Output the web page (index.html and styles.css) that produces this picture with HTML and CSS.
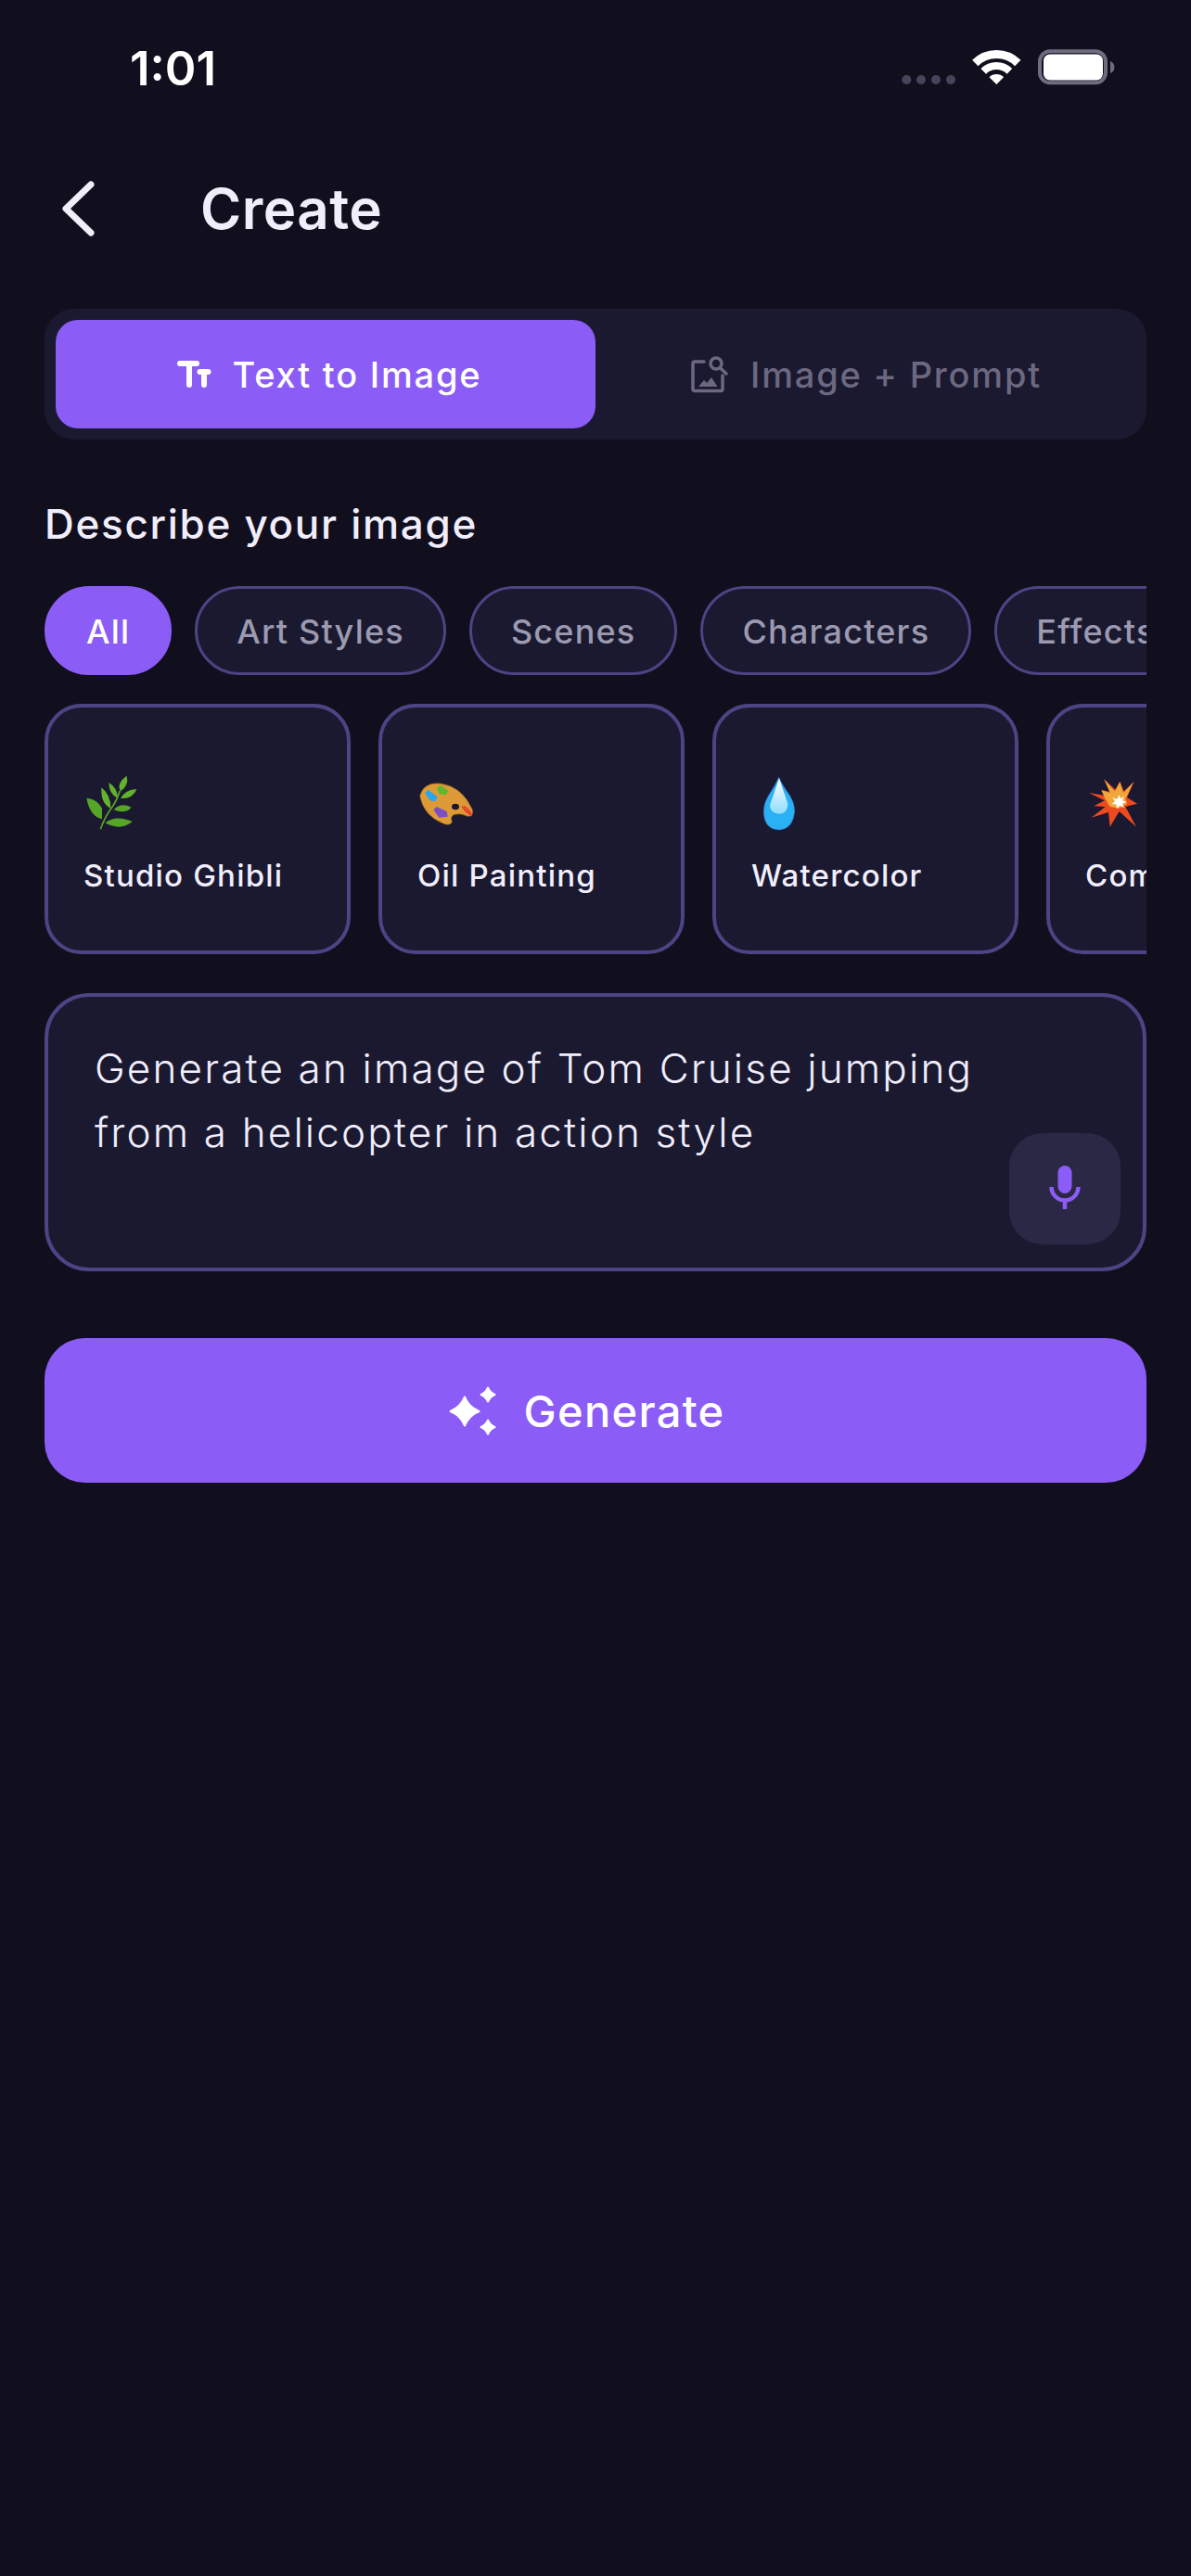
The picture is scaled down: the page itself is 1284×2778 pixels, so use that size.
FILE: index.html
```html
<!DOCTYPE html>
<html lang="en">
<head>
    <meta charset="UTF-8">
    <meta name="viewport" content="width=device-width, initial-scale=1.0">
    <title>Create</title>
    <link rel="stylesheet" href="styles.css">
</head>
<body>

    <div class="status-bar">
        <span class="time">1:01</span>
        <svg class="status-icons" width="230" height="40" viewBox="0 0 230 40">
            <g fill="#45445a">
                <circle cx="5.3" cy="33" r="5"/>
                <circle cx="21" cy="33" r="5"/>
                <circle cx="37" cy="33" r="5"/>
                <circle cx="53" cy="33" r="5"/>
            </g>
            <g fill="none" stroke="#fff">
                <path d="M79.3 15A32.5 32.5 0 0 1 125.3 15" stroke-width="9"/>
                <path d="M88.2 23.9A20 20 0 0 1 116.4 23.9" stroke-width="8"/>
            </g>
            <path d="M102.3 38L94.5 30.2A11 11 0 0 1 110.1 30.2Z" fill="#fff"/>
            <rect x="149" y="2.3" width="71" height="34" rx="11" fill="none" stroke="#6f6c80" stroke-width="4"/>
            <rect x="153" y="5.5" width="64" height="28" rx="7" fill="#fff"/>
            <path d="M225 13a7 7 0 0 1 0 13Z" fill="#6f6c80"/>
        </svg>
    </div>

    <div class="page">
        <div class="header">
            <svg class="back" width="36" height="60" viewBox="0 0 36 60">
                <path d="M32 4L5 30L32 56" fill="none" stroke="#f1eefc" stroke-width="7" stroke-linecap="round" stroke-linejoin="round"/>
            </svg>
            <h1>Create</h1>
        </div>

        <div class="tabs">
            <div class="tab active">
                <svg width="40" height="32" viewBox="0 0 40 32">
                    <path d="M5 4H23M15 4V27M26.5 13H35.5M31 13V27" fill="none" stroke="#fff" stroke-width="6" stroke-linecap="round"/>
                </svg>
                <span>Text to Image</span>
            </div>
            <div class="tab">
                <svg width="44" height="44" viewBox="0 0 44 44">
                    <g fill="none" stroke="#6b6880" stroke-width="3.5" stroke-linecap="round">
                        <path d="M16 8H6a2 2 0 0 0-2 2v27.5a2 2 0 0 0 2 2h28a2 2 0 0 0 2-2V23"/>
                        <circle cx="29" cy="10" r="6"/>
                        <path d="M33.5 15L40 21"/>
                    </g>
                    <path d="M10 35L16 28L19 31L24 25L30.5 35Z" fill="#6b6880"/>
                </svg>
                <span>Image + Prompt</span>
            </div>
        </div>

        <h2 class="section-title">Describe your image</h2>

        <div class="pills">
            <div class="pill active">All</div>
            <div class="pill">Art Styles</div>
            <div class="pill">Scenes</div>
            <div class="pill">Characters</div>
            <div class="pill">Effects</div>
        </div>

        <div class="cards">
            <div class="card">
                <svg width="60" height="60" viewBox="30 18 180 180">
                    <path d="M85 193Q100 150 125 118Q140 95 148 68" fill="none" stroke="#5fa62a" stroke-width="5"/>
                    <g fill="#62b22d">
                        <path d="M112 42Q142 60 140 92Q112 78 112 42Z"/>
                        <path d="M170 20Q178 50 150 70Q135 45 170 20Z"/>
                        <path d="M202 63Q190 95 150 93Q165 65 202 63Z"/>
                        <path d="M88 58Q118 80 118 125Q85 110 88 58Z"/>
                    </g>
                    <g fill="#56a528">
                        <path d="M40 92Q75 95 90 125L90 160Q50 150 40 92Z"/>
                        <path d="M128 130Q150 105 185 122Q165 145 128 130Z"/>
                        <path d="M100 172Q135 145 188 168Q150 200 100 172Z"/>
                    </g>
                </svg>
                <span>Studio Ghibli</span>
            </div>
            <div class="card">
                <svg width="60" height="60" viewBox="30 18 180 180">
                    <path d="M38 85Q50 40 105 45Q175 55 208 130Q212 155 190 150Q170 140 150 145Q135 150 142 170Q135 182 115 175Q50 150 38 85Z" fill="#dd9a37" stroke="#9a6426" stroke-width="2"/>
                    <ellipse cx="153" cy="120" rx="12" ry="10" fill="#1a1930"/>
                    <path d="M55 75L65 65L95 88L88 103L70 100Z" fill="#2aa6ea"/>
                    <path d="M93 60L105 50L130 68L122 82L100 78Z" fill="#5cb82e"/>
                    <path d="M82 130L92 120L125 135L128 152L100 155Z" fill="#7a4fc4"/>
                    <path d="M175 120L205 145M180 118Q200 128 205 148Q185 140 175 118" fill="none" stroke="#e8372a" stroke-width="4"/>
                </svg>
                <span>Oil Painting</span>
            </div>
            <div class="card">
                <svg width="60" height="60" viewBox="60 48 180 180">
                    <defs>
                        <linearGradient id="dropShine" x1="0" y1="0" x2="0" y2="1">
                            <stop offset="0" stop-color="#fff"/>
                            <stop offset="1" stop-color="#8fdcff"/>
                        </linearGradient>
                    </defs>
                    <path d="M149 55Q160 80 185 115Q200 140 200 165Q195 222 149 225Q100 222 100 165Q100 140 115 115Q138 80 149 55Z" fill="#29b0f5" stroke="#3b6fc9" stroke-width="2"/>
                    <path d="M150 58L178 140Q178 172 150 173Q120 172 120 145Z" fill="url(#dropShine)"/>
                </svg>
                <span>Watercolor</span>
            </div>
            <div class="card">
                <svg width="60" height="60" viewBox="60 48 180 180">
                    <path d="M120 60L158 95L172 68L185 100L218 68L195 120L228 140L190 150L225 215L170 165L140 215L135 168L80 185L125 150L88 148L122 130L72 105L130 115L112 95L140 102Z" fill="#ee4a1f"/>
                    <path d="M122 62L155 100L172 70L183 105L215 72L190 125L195 140L170 155L140 150L125 125L112 97L140 105Z" fill="#f0a63a"/>
                    <path d="M170 112L174 124L186 116L180 130L194 134L180 140L186 154L172 146L162 156L160 142L146 142L156 132L148 120L162 126Z" fill="#fff"/>
                </svg>
                <span>Comic Book</span>
            </div>
        </div>

        <div class="prompt">
            <p>Generate an image of Tom Cruise jumping<br>from a helicopter in action style</p>
            <div class="mic">
                <svg width="44" height="56" viewBox="0 0 44 56">
                    <rect x="14.5" y="3" width="15" height="30" rx="7.5" fill="#8b5cf6"/>
                    <path d="M7.5 26a14.5 14.5 0 0 0 29 0M22 41V50" fill="none" stroke="#8b5cf6" stroke-width="4.5"/>
                </svg>
            </div>
        </div>

        <div class="generate">
            <svg width="52" height="56" viewBox="0 0 52 56">
                <g fill="#fff" stroke="#fff" stroke-width="2" stroke-linejoin="round">
                    <path d="M18 13.5Q22.5 24.5 33.5 29Q22.5 33.5 18 44.5Q13.5 33.5 2.5 29Q13.5 24.5 18 13.5Z"/>
                    <path d="M43 3.5Q45.2 8.8 50.5 11Q45.2 13.2 43 18.5Q40.8 13.2 35.5 11Q40.8 8.8 43 3.5Z"/>
                    <path d="M43 38.5Q45.2 43.8 50.5 46Q45.2 48.2 43 53.5Q40.8 48.2 35.5 46Q40.8 43.8 43 38.5Z"/>
                </g>
            </svg>
            <span>Generate</span>
        </div>
    </div>

</body>
</html>
```

FILE: styles.css
```css
body {
    margin: 0;
    min-height: 2778px;
    background-color: #110f1e;
    font-family: Inter, "Liberation Sans", sans-serif;
    color: #f1eefc;
}

.status-bar {
    display: flex;
    justify-content: space-between;
    align-items: flex-start;
    height: 145px;
    box-sizing: border-box;
    padding: 52px 82px 0 140px;
}

.time {
    font-size: 51px;
    font-weight: 600;
    line-height: 44px;
    color: #fff;
}

.status-icons {
    display: block;
    margin-top: 1px;
}

.page {
    padding: 0 48px;
}

.header {
    display: flex;
    align-items: center;
    height: 160px;
    padding-left: 18px;
}

.header h1 {
    margin: 0 0 0 114px;
    font-size: 60px;
    font-weight: 600;
    letter-spacing: 0.5px;
}

.tabs {
    display: flex;
    height: 141px;
    box-sizing: border-box;
    margin-top: 28px;
    padding: 12px;
    background-color: #1a1930;
    border-radius: 32px;
}

.tab {
    flex: 0 0 582px;
    box-sizing: border-box;
    display: flex;
    align-items: center;
    justify-content: center;
    gap: 22px;
    border-radius: 24px;
    font-size: 38px;
    font-weight: 500;
    letter-spacing: 1.8px;
    color: #6b6880;
}

.tab.active {
    padding-left: 6px;
    background-color: #8b5cf6;
    color: #fff;
}

.section-title {
    margin: 61px 0 0;
    font-size: 44px;
    font-weight: 500;
    letter-spacing: 1.7px;
    line-height: 60px;
}

.pills {
    display: flex;
    gap: 25px;
    margin-top: 37px;
    overflow: hidden;
}

.pill {
    flex-shrink: 0;
    height: 96px;
    box-sizing: border-box;
    padding: 0 42px;
    background-color: #1a1930;
    border: 3px solid #4c4484;
    border-radius: 48px;
    font-size: 36px;
    font-weight: 500;
    letter-spacing: 1.2px;
    line-height: 92px;
    color: #9c9ab0;
}

.pill.active {
    background-color: #8b5cf6;
    border-color: #8b5cf6;
    color: #fff;
}

.cards {
    display: flex;
    gap: 30px;
    margin-top: 31px;
    overflow: hidden;
}

.card {
    flex-shrink: 0;
    width: 330px;
    height: 270px;
    box-sizing: border-box;
    padding: 73px 0 0 38px;
    background-color: #1a1930;
    border: 4px solid #4c4484;
    border-radius: 40px;
    font-size: 33px;
    font-weight: 500;
    letter-spacing: 1.2px;
    white-space: nowrap;
}

.card svg {
    display: block;
    margin-bottom: 28px;
}

.prompt {
    position: relative;
    height: 300px;
    box-sizing: border-box;
    margin-top: 42px;
    padding: 43px 50px 0;
    background-color: #1a1930;
    border: 4px solid #4c4484;
    border-radius: 48px;
}

.prompt p {
    margin: 0;
    font-size: 44px;
    font-weight: 300;
    letter-spacing: 2.15px;
    line-height: 69px;
}

.mic {
    position: absolute;
    right: 24px;
    bottom: 25px;
    display: flex;
    align-items: center;
    justify-content: center;
    width: 120px;
    height: 120px;
    background-color: #2b2845;
    border-radius: 36px;
}

.generate {
    display: flex;
    align-items: center;
    justify-content: center;
    gap: 30px;
    height: 156px;
    margin-top: 72px;
    padding-right: 20px;
    background-color: #8b5cf6;
    border-radius: 44px;
    font-size: 47px;
    font-weight: 500;
    letter-spacing: 1.3px;
    color: #fff;
}
```
